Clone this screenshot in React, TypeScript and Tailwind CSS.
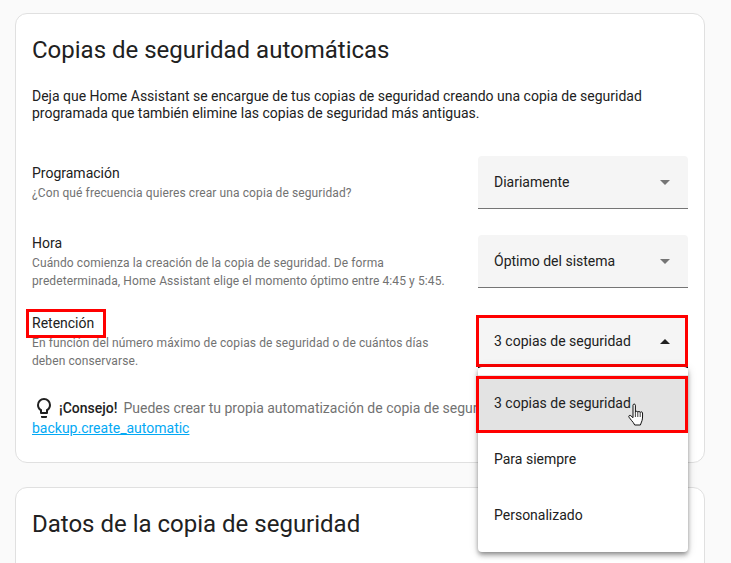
const font = "font-['Roboto',sans-serif]";

function Caret({ up, dark }: { up?: boolean; dark?: boolean }) {
  return (
    <svg width="10" height="5" viewBox="0 0 10 5" className="shrink-0">
      <path d={up ? "M0 5L5 0L10 5Z" : "M0 0L5 5L10 0Z"} fill={dark ? "#212121" : "#757575"} />
    </svg>
  );
}

function Select({ value, open }: { value: string; open?: boolean }) {
  return (
    <div
      className={`flex h-[53px] w-[210px] shrink-0 items-center justify-between rounded-t-[4px] border-b bg-[#f5f5f5] pl-4 pr-[18px] text-[14px] text-[#212121] ${
        open ? "border-[#111111]" : "border-[#757575]"
      }`}
    >
      <span>{value}</span>
      <Caret up={open} dark={open} />
    </div>
  );
}

function Row({
  label,
  children,
  value,
  open,
  className,
  subClass,
}: {
  label: string;
  children: React.ReactNode;
  value: string;
  open?: boolean;
  className?: string;
  subClass?: string;
}) {
  return (
    <div className={`flex items-center justify-between ${className ?? ""}`}>
      <div className="w-[420px]">
        <div className="text-[14px] leading-[18px] text-[#212121]">{label}</div>
        <div className={`mt-[2px] text-[12px] leading-[18px] tracking-[0.1px] text-[#727272] ${subClass ?? ""}`}>{children}</div>
      </div>
      <Select value={value} open={open} />
    </div>
  );
}

function Hand() {
  return (
    <svg width="18" height="25" viewBox="0 0 18 25" className="absolute left-[150px] top-[28px]">
      <path
        d="M5 2.2c0-1.5 2.4-1.5 2.4 0v7.1c.2-1.4 2.3-1.4 2.4 0 .2-1.2 2.2-1.2 2.4.2.3-1 2.2-1 2.3.5.1 2.6.2 5.5-.5 7.7-.5 1.6-1.3 3-1.6 4.3H6.700c-.6-1.800-2-3-3.300-4.700L1 14.200c-.8-1.200.6-2.500 1.800-1.500L5 14.700Z"
        fill="#ffffff"
        stroke="#111111"
        strokeWidth="1"
        strokeLinejoin="round"
      />
      <path d="M7.400 9.300V14M9.800 9.300V14M12.200 9.500V14" stroke="#111111" strokeWidth="0.8" fill="none" />
    </svg>
  );
}

export default function App() {
  return (
    <div className={`h-[563px] w-[731px] overflow-hidden bg-[#fafafa] pl-[15px] pt-[13px] ${font}`}>
      <div className="relative h-[450px] w-[690px] rounded-[12px] border border-[#e0e0e0] bg-white">
        <div className="px-4 pt-[20px]">
          <h1 className="text-[24px] leading-[32px] text-[#212121]">Copias de seguridad automáticas</h1>
          <p className="mt-[22px] text-[14px] leading-[17px] text-[#212121]">
            Deja que Home Assistant se encargue de tus copias de seguridad creando una copia de seguridad
            <br />
            programada que también elimine las copias de seguridad más antiguas.
          </p>
          <div className="mt-[34px] flex flex-col">
            <Row label="Programación" value="Diariamente">
              ¿Con qué frecuencia quieres crear una copia de seguridad?
            </Row>
            <Row label="Hora" value="Óptimo del sistema" className="mt-[25px]" subClass="-mb-[1px]">
              Cuándo comienza la creación de la copia de seguridad. De forma
              <br />
              predeterminada, Home Assistant elige el momento óptimo entre 4:45 y 5:45.
            </Row>
            <Row label="Retención" value="3 copias de seguridad" open className="mt-[25px]" subClass="-mb-[1px]">
              En función del número máximo de copias de seguridad o de cuántos días
              <br />
              deben conservarse.
            </Row>
          </div>
          <div className="mt-[27px] text-[14px] leading-[20px] text-[#727272]">
            <div className="flex h-[24px] items-center whitespace-nowrap">
              <svg width="24" height="24" viewBox="0 0 24 24" className="shrink-0" fill="#212121">
                <path d="M12,2A7,7 0 0,1 19,9C19,11.38 17.81,13.47 16,14.74V17A1,1 0 0,1 15,18H9A1,1 0 0,1 8,17V14.74C6.19,13.47 5,11.38 5,9A7,7 0 0,1 12,2M9,21V20H15V21A1,1 0 0,1 14,22H10A1,1 0 0,1 9,21M12,4A5,5 0 0,0 7,9C7,11.05 8.23,12.81 10,13.58V16H14V13.58C15.77,12.81 17,11.05 17,9A5,5 0 0,0 12,4Z" />
              </svg>
              <span className="ml-[3px] font-medium text-[#212121]">¡Consejo!</span>
              <span className="ml-[6px]">Puedes crear tu propia automatización de copia de seguridad con la acción</span>
            </div>
            <a className="-mt-[2px] block text-[#03a9f4] underline">backup.create_automatic</a>
          </div>
        </div>

        <div className="absolute left-[10px] top-[295px] h-[29px] w-[80px] border-[3px] border-[#ff0000]" />
        <div className="absolute left-[460px] top-[301px] h-[52px] w-[212px] border-[3px] border-[#ff0000]" />

        <div className="absolute left-[462px] top-[353px] h-[185px] w-[210px] rounded-[4px] bg-white py-2 text-[14px] text-[#212121] shadow-[0_2px_4px_-1px_rgba(0,0,0,0.3),0_4px_5px_0_rgba(0,0,0,0.2),0_1px_10px_0_rgba(0,0,0,0.15)]">
          <div className="relative flex h-[56px] items-center bg-[#e3e3e3] pl-4">
            3 copias de seguridad
            <div className="absolute -left-[2px] right-0 top-[1px] h-[57px] border-[3px] border-[#ff0000]" />
            <Hand />
          </div>
          <div className="flex h-[56px] items-center pl-4">Para siempre</div>
          <div className="flex h-[56px] items-center pl-4">Personalizado</div>
        </div>
      </div>

      <div className="mt-[24px] h-[200px] w-[690px] rounded-[12px] border border-[#e0e0e0] bg-white px-4 pt-[20px]">
        <h2 className="text-[24px] leading-[32px] text-[#212121]">Datos de la copia de seguridad</h2>
      </div>
    </div>
  );
}
